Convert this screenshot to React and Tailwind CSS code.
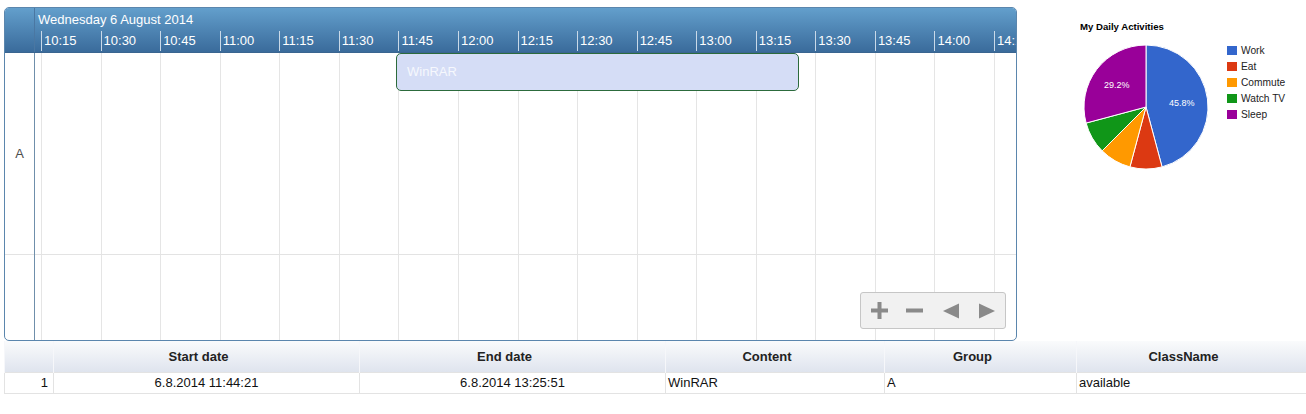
import React from "react";

const times = ["10:15", "10:30", "10:45", "11:00", "11:15", "11:30", "11:45", "12:00", "12:15",
    "12:30", "12:45", "13:00", "13:15", "13:30", "13:45", "14:00", "14:15"];

const slices = [
    {name: "Work", color: "#3366cc", d: "M129,107 L129,45 A62,62 0 0,1 145.05,166.89 Z"},
    {name: "Eat", color: "#dc3912", d: "M129,107 L145.05,166.89 A62,62 0 0,1 112.95,166.89 Z"},
    {name: "Commute", color: "#ff9900", d: "M129,107 L112.95,166.89 A62,62 0 0,1 85.16,150.84 Z"},
    {name: "Watch TV", color: "#109618", d: "M129,107 L85.16,150.84 A62,62 0 0,1 69.11,123.05 Z"},
    {name: "Sleep", color: "#990099", d: "M129,107 L69.11,123.05 A62,62 0 0,1 129,45 Z"},
];

const Timeline = () => {
    return (
        <div className="relative ml-[4px] mt-[7px] w-[1013px] h-[334px] border border-[#5b86ad] rounded-[5px] overflow-hidden bg-white">
            {/* header */}
            <div className="flex h-[45px] bg-linear-to-b from-[#639fcc] to-[#3a6b9b] border-b border-[#3a6590]">
                <div className="w-[30px] shrink-0 border-r border-[#4a77a2]"/>
                <div className="flex flex-col min-w-0 flex-1 overflow-hidden">
                    <div className="h-[23px] pl-[3px] pt-[3px] text-[13px] leading-[17px] text-white">
                        Wednesday 6 August 2014
                    </div>
                    <div className="flex h-[21px]">
                        <div className="w-[6px] shrink-0"/>
                        {times.map((t) => (
                            <div key={t}
                                 className="w-[59.5625px] shrink-0 h-[20px] border-l border-[#c9d9e8] pl-[2px] text-[13px] leading-[20px] text-white">
                                {t}
                            </div>
                        ))}
                    </div>
                </div>
            </div>
            {/* body */}
            <div className="flex h-[287px]">
                <div className="w-[30px] shrink-0 border-r border-[#6f8fab] flex flex-col">
                    <div className="h-[202px] border-b border-[#e3e3e3] flex items-center justify-center text-[13px] text-[#4d4d4d]">
                        A
                    </div>
                    <div className="flex-1"/>
                </div>
                <div className="relative flex-1 overflow-hidden">
                    <div className="flex h-full">
                        <div className="w-[6px] shrink-0"/>
                        {times.map((t) => (
                            <div key={t} className="w-[59.5625px] shrink-0 h-full border-l border-[#e5e5e5]"/>
                        ))}
                    </div>
                    <div className="absolute left-0 right-0 top-[201px] h-px bg-[#e3e3e3]"/>
                    <div
                        className="absolute left-[361px] top-0 w-[403px] h-[38px] bg-[#d5ddf6] border border-[#2c6b3c] rounded-[5px] pl-[10px] flex items-center text-[13px] text-[#f6f8fd]">
                        WinRAR
                    </div>
                </div>
            </div>
            {/* zoom / move controls */}
            <div
                className="absolute right-[10px] bottom-[11px] w-[146px] h-[37px] bg-[#f1f1f1] border border-[#c6c6c6] rounded-[3px] flex items-center">
                <svg width="17" height="17" viewBox="0 0 17 17" className="ml-[10px]">
                    <rect x="0" y="6.5" width="17" height="4" fill="#8a8a8a"/>
                    <rect x="6.5" y="0" width="4" height="17" fill="#8a8a8a"/>
                </svg>
                <svg width="17" height="17" viewBox="0 0 17 17" className="ml-[18px]">
                    <rect x="0" y="6.5" width="17" height="4" fill="#8a8a8a"/>
                </svg>
                <svg width="16" height="16" viewBox="0 0 16 16" className="ml-[20px]">
                    <polygon points="0,8 16,0.5 16,15.5" fill="#8a8a8a"/>
                </svg>
                <svg width="16" height="16" viewBox="0 0 16 16" className="ml-[20px]">
                    <polygon points="16,8 0,0.5 0,15.5" fill="#8a8a8a"/>
                </svg>
            </div>
        </div>
    );
}

const PieChart = () => {
    return (
        <div className="w-[289px] h-[200px] shrink-0">
            <svg width="289" height="200" viewBox="0 0 289 200" fontFamily="'Liberation Sans', Arial, sans-serif">
                <text x="63" y="30" fontSize="9.6" fontWeight="bold" fill="#000">My Daily Activities</text>
                {slices.map((s) => (
                    <path key={s.name} d={s.d} fill={s.color} stroke="#fff" strokeWidth="1"/>
                ))}
                <text x="164.7" y="106.2" fontSize="9" fill="#fff" textAnchor="middle">45.8%</text>
                <text x="99.7" y="88.3" fontSize="9" fill="#fff" textAnchor="middle">29.2%</text>
                {slices.map((s, i) => (
                    <g key={s.name}>
                        <rect x="210" y={46 + i * 16} width="10" height="9" fill={s.color}/>
                        <text x="224" y={54 + i * 16} fontSize="10.2" fill="#222">{s.name}</text>
                    </g>
                ))}
            </svg>
        </div>
    );
}

const DataTable = () => {
    const th = "h-[31px] border-r border-l border-[#f6f7fa] pr-[16px] font-bold text-[13px] text-[#222] text-center";
    const td = "h-[21px] border-r border-[#e3e3e3] text-[13px] text-[#111] leading-[20px]";
    return (
        <table className="ml-[4px] w-[1302px] table-fixed border-collapse">
            <colgroup>
                <col className="w-[49px]"/>
                <col className="w-[306px]"/>
                <col className="w-[306px]"/>
                <col className="w-[219px]"/>
                <col className="w-[192px]"/>
                <col className="w-[230px]"/>
            </colgroup>
            <thead>
            <tr className="bg-linear-to-b from-[#fafbfc] to-[#dfe4ee]">
                <th className={th}/>
                <th className={th}>Start date</th>
                <th className={th}>End date</th>
                <th className={th}>Content</th>
                <th className={th}>Group</th>
                <th className={th}>ClassName</th>
            </tr>
            </thead>
            <tbody>
            <tr className="border-b border-t border-[#e3e3e3]">
                <td className={td + " border-l text-right pr-[5px]"}>1</td>
                <td className={td + " text-center"}>6.8.2014 11:44:21</td>
                <td className={td + " text-center"}>6.8.2014 13:25:51</td>
                <td className={td + " pl-[2px]"}>WinRAR</td>
                <td className={td + " pl-[2px]"}>A</td>
                <td className={td + " pl-[2px]"}>available</td>
            </tr>
            </tbody>
        </table>
    );
}

const App = () => {
    return (
        <div className="w-[1306px] h-[414px] overflow-hidden bg-white font-['Liberation_Sans',Arial,sans-serif]">
            <div className="flex items-start">
                <Timeline/>
                <PieChart/>
            </div>
            <DataTable/>
        </div>
    );
}

export default App;
